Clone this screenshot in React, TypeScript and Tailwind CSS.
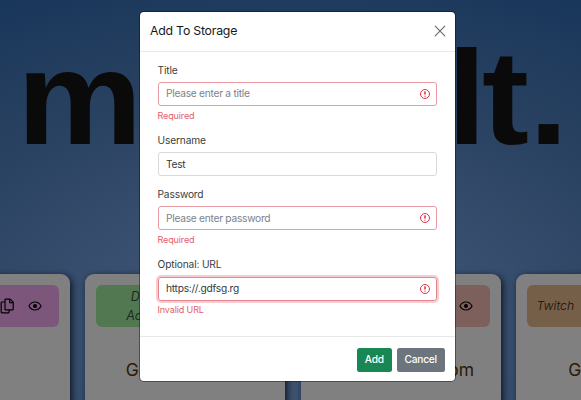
import type { ReactNode } from "react";

function InvalidIcon() {
  return (
    <svg viewBox="0 0 12 12" className="size-[12px] shrink-0" fill="none" stroke="#dc3545">
      <circle cx="6" cy="6" r="4.5" />
      <path strokeLinejoin="round" d="M5.8 3.6h.4L6 6.5z" />
      <circle cx="6" cy="8.2" r=".6" fill="#dc3545" stroke="none" />
    </svg>
  );
}

function CopyIcon() {
  return (
    <svg viewBox="0 0 14 16" className="h-[16px] w-[14px]" fill="none" stroke="currentColor" strokeWidth="1.2" strokeLinejoin="round">
      <path d="M5.6 1.1h4.6l3 3v7.1a.6.6 0 0 1-.6.6h-7a.6.6 0 0 1-.6-.6V1.7a.6.6 0 0 1 .6-.6z" />
      <path d="M9.7 1.2v3.4h3.4" />
      <path d="M4.800 4H1.9a.7.7 0 0 0-.7.7v9.4c0 .4.3.7.7.7h6.5a.7.7 0 0 0 .7-.7V12" />
    </svg>
  );
}

function EyeIcon() {
  return (
    <svg viewBox="0 0 14 10" className="h-[10px] w-[14px]" fill="none" stroke="currentColor" strokeWidth="1.1">
      <path d="M.9 5C2.3 2.4 4.5 1 7 1s4.700 1.400 6.100 4C11.700 7.600 9.500 9 7 9S2.300 7.600.9 5z" />
      <circle cx="7" cy="5" r="2" fill="currentColor" stroke="none" />
    </svg>
  );
}

type FieldProps = { label: string; value?: string; placeholder?: string; error?: string; focused?: boolean };

function Field({ label, value, placeholder, error, focused }: FieldProps) {
  const border = error ? (focused ? "border-[#e4848d] shadow-[0_0_0_2px_#f8cdd1]" : "border-[#ea9aa2]") : "border-[#d6dadf]";
  return (
    <div className={error ? "h-[70.4px]" : "h-[54px]"}>
      <div className="h-[17px] text-[10.2px] leading-[17px] tracking-[-0.15px] text-[#383d42]">{label}</div>
      <div className={`mt-[3.5px] flex h-[24px] items-center justify-between rounded-[3px] border pr-[5px] pl-[7.5px] text-[10.2px] tracking-[-0.26px] ${border}`}>
        <span className={value ? "text-[#33383d]" : "text-[#7a828a]"}>{value ?? placeholder}</span>
        {error && <InvalidIcon />}
      </div>
      {error && <div className="mt-[2.7px] text-[9px] leading-[14px] tracking-[-0.12px] text-[#e35d6a]">{error}</div>}
    </div>
  );
}

function Card({ tint, children, site }: { tint: string; children: ReactNode; site?: string }) {
  return (
    <div className="h-[140px] w-[200px] shrink-0 rounded-[9px] bg-[#808080] p-[11px] shadow-[2px_2px_7px_0px_rgba(0,8,20,0.8)]">
      <div className={`flex h-[42px] items-center rounded-[6px] ${tint}`}>{children}</div>
      {site && <div className="mt-[31px] text-center text-[17.5px] leading-[24px] whitespace-nowrap text-[#2b1a05]">{site}</div>}
    </div>
  );
}

export default function App() {
  return (
    <div className="relative h-[400px] w-[581px] overflow-hidden bg-[radial-gradient(ellipse_115%_105%_at_50%_85%,#40546f_0%,#3a5070_30%,#2a4261_60%,#1f3b5d_80%,#14325a_100%)] font-['Inter',sans-serif]">
      <div className="h-[274px]">
        <h1 className="flex justify-between pt-[20.7px] pr-[12.5px] pl-[17px] font-['Liberation_Sans',sans-serif] text-[133px] leading-[155px] font-bold whitespace-nowrap text-[#0a0a0a]">
          <span className="origin-left scale-x-[1.06]">m</span>
          <span className="tracking-[-12px]">yVau</span>
          <span className="origin-right scale-x-[1.06]">
            <span className="tracking-[-4px]">l</span>t.
          </span>
        </h1>
      </div>
      <div className="-ml-[130.5px] flex gap-[15.5px]">
        <Card tint="bg-[#7d567b]">
          <div className="ml-auto flex items-center gap-[14px] pr-[17px] text-black">
            <CopyIcon />
            <EyeIcon />
          </div>
        </Card>
        <Card tint="bg-[#527852]" site="Gmail account">
          <span className="w-[109px] text-center text-[12.5px] leading-[19px] tracking-[-0.1px] text-[#1d2a1d] italic">
            Disney
            <br />
            Account
          </span>
        </Card>
        <Card tint="bg-[#7d5f5c]" site="Gmail@mails.com">
          <div className="ml-auto pr-[17px] text-black">
            <EyeIcon />
          </div>
        </Card>
        <Card tint="bg-[#755f48]" site="Github.com">
          <span className="pl-[9.5px] text-[12.3px] font-light text-[#15110c] italic">Twitch</span>
        </Card>
      </div>

      <div className="absolute top-[11.5px] left-[140px] flex h-[369.5px] w-[315px] flex-col rounded-[4px] bg-white shadow-[0_0_0_1px_rgba(0,0,30,0.4)]">
        <div className="flex h-[40px] items-center justify-between border-b border-[#e6e8ea] px-[10px]">
          <h2 className="text-[12.3px] tracking-[-0.22px] text-[#15181b]">Add To Storage</h2>
          <svg viewBox="0 0 10 10" className="size-[10px] overflow-visible" stroke="#666" strokeWidth="1.1" strokeLinecap="round">
            <path d="M.2.2l9.600 9.600M9.800.2L.2 9.800" />
          </svg>
        </div>
        <div className="flex-1 pt-[10px] pr-[18px] pl-[17.5px]">
          <Field label="Title" placeholder="Please enter a title" error="Required" />
          <Field label="Username" value="Test" />
          <Field label="Password" placeholder="Please enter password" error="Required" />
          <Field label="Optional: URL" value="https://.gdfsg.rg" error="Invalid URL" focused />
        </div>
        <div className="flex h-[45px] items-center justify-end gap-[5.5px] border-t border-[#e6e8ea] pt-[1px] pr-[10.5px] text-[10.2px] font-medium tracking-[-0.25px] text-white">
          <div className="flex h-[24px] w-[34.5px] items-center justify-center rounded-[2.5px] bg-[#198754]">Add</div>
          <div className="flex h-[24px] w-[47.5px] items-center justify-center rounded-[2.5px] bg-[#6c757d]">Cancel</div>
        </div>
      </div>
    </div>
  );
}
